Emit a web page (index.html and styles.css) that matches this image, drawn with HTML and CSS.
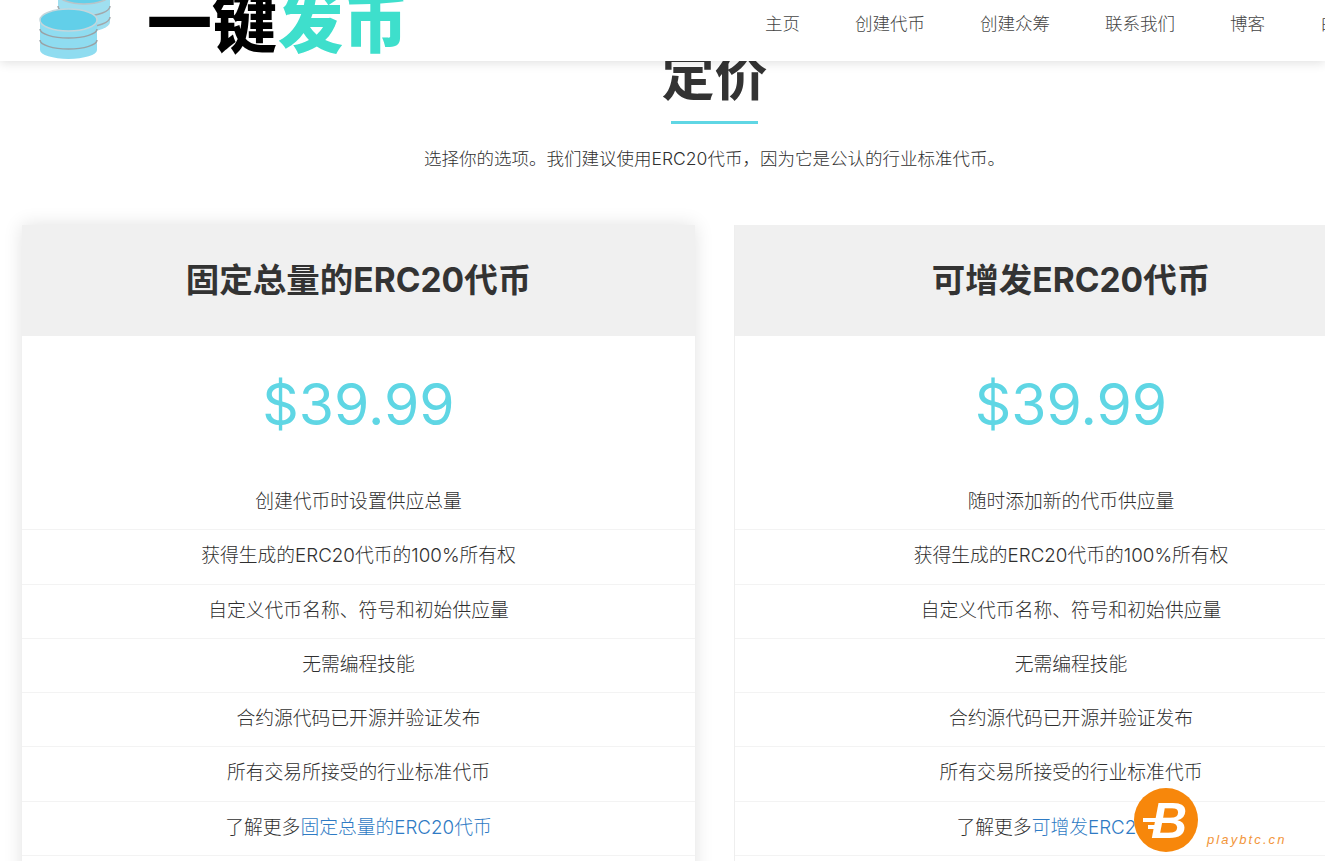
FILE: index.html
```html
<!DOCTYPE html>
<html lang="zh-CN">
<head>
  <meta charset="UTF-8" />
  <meta name="viewport" content="width=device-width, initial-scale=1.0"/>
  <title>一键发币 - 定价</title>
  <link rel="stylesheet" href="styles.css">
</head>
<body>

<header class="site-header">
  <a href="#" class="logo">
    <svg class="logo-coins" width="76" height="62" viewBox="0 0 76 62">
      <path d="M20 -8 h52 v30 a26 10 0 0 1 -52 0 z" fill="#9fdff0"/>
      <ellipse cx="46" cy="-6" rx="26" ry="10" fill="#62cfe9" stroke="#b9c4c8" stroke-width="1.500"/>
      <path d="M20 6 a26 10 0 0 0 52 0 M20 17 a26 10 0 0 0 52 0" fill="none" stroke="#a3a8ab" stroke-width="1.500"/>
      <path d="M2 20 h57 v30 a28.500 9 0 0 1 -57 0 z" fill="#8fdcf0"/>
      <path d="M2 29 a28.500 9 0 0 0 57 0 M2 40 a28.500 9 0 0 0 57 0" fill="none" stroke="#9aa2a6" stroke-width="1.500"/>
      <ellipse cx="30.500" cy="20" rx="28.500" ry="11" fill="#62cfe9" stroke="#c4d6dc" stroke-width="1.500"/>
    </svg>
    <span class="logo-text">一键<span class="logo-accent">发币</span></span>
  </a>
  <nav class="main-nav">
    <a href="#">主页</a>
    <a href="#">创建代币</a>
    <a href="#">创建众筹</a>
    <a href="#">联系我们</a>
    <a href="#">博客</a>
    <a href="#">白皮书</a>
  </nav>
</header>

<main class="pricing">
  <div class="section-title">
    <h2>定价</h2>
    <div class="title-line"></div>
    <p>选择你的选项。我们建议使用ERC20代币，因为它是公认的行业标准代币。</p>
  </div>

  <div class="plans">
    <div class="plan plan-first">
      <h3 class="plan-name">固定总量的ERC20代币</h3>
      <div class="plan-price">$39.99</div>
      <ul class="plan-list">
        <li>创建代币时设置供应总量</li>
        <li>获得生成的ERC20代币的100%所有权</li>
        <li>自定义代币名称、符号和初始供应量</li>
        <li>无需编程技能</li>
        <li>合约源代码已开源并验证发布</li>
        <li>所有交易所接受的行业标准代币</li>
        <li>了解更多<a href="#">固定总量的ERC20代币</a></li>
        <li></li>
      </ul>
    </div>

    <div class="plan plan-second">
      <h3 class="plan-name">可增发ERC20代币</h3>
      <div class="plan-price">$39.99</div>
      <ul class="plan-list">
        <li>随时添加新的代币供应量</li>
        <li>获得生成的ERC20代币的100%所有权</li>
        <li>自定义代币名称、符号和初始供应量</li>
        <li>无需编程技能</li>
        <li>合约源代码已开源并验证发布</li>
        <li>所有交易所接受的行业标准代币</li>
        <li>了解更多<a href="#">可增发ERC20代币</a></li>
        <li></li>
      </ul>
    </div>
  </div>
</main>

<div class="watermark">
  <svg class="watermark-icon" width="64" height="64" viewBox="0 0 64 64">
    <circle cx="32" cy="32" r="32" fill="#f7870b"/>
    <text x="35" y="50" class="watermark-b">B</text>
    <path d="M9 30 h17 v4 h-17 z M14 37 h12 v4 h-12 z" fill="#fff"/>
  </svg>
  <span class="watermark-text">playbtc.cn</span>
</div>

</body>
</html>
```

FILE: styles.css
```css
* {
  margin: 0; padding: 0; box-sizing: border-box;
}

html, body {
  height: 861px;
  overflow: hidden;
}

body {
  font-family: 'Inter', 'Noto Sans CJK SC', sans-serif;
  font-weight: 300;
  background: #fff;
  color: #2f2f2f;
}

a {
  text-decoration: none;
}

.site-header {
  position: absolute;
  top: 0;
  left: 0;
  width: 100%;
  height: 61px;
  background: #fff;
  box-shadow: 0 2px 10px rgba(0, 0, 0, 0.12);
  z-index: 10;
  overflow: hidden;
}

.logo {
  display: flex;
  align-items: flex-start;
  padding-left: 38px;
  height: 61px;
  overflow: hidden;
}

.logo-coins {
  flex-shrink: 0;
}

.logo-text {
  font-family: 'Noto Sans CJK SC', sans-serif;
  font-size: 65px;
  font-weight: 900;
  line-height: 65px;
  color: #000;
  white-space: nowrap;
  margin-left: 33px;
  margin-top: -13px;
}

.logo-accent {
  color: #3edfcc;
  margin-left: 1px;
}

.main-nav {
  display: flex;
  gap: 55px;
  white-space: nowrap;
  position: absolute;
  top: 12px;
  left: 765px;
}

.main-nav a {
  color: #444;
  font-size: 17.5px;
  line-height: 24px;
}

.pricing {
  padding: 47px 0 0 22px;
}

.section-title {
  width: 1385px;
  text-align: center;
}

.section-title h2 {
  font-size: 53px;
  font-weight: 700;
  line-height: 60px;
  color: #333;
}

.title-line {
  width: 87px;
  height: 3px;
  background: #5fd6e4;
  margin: 14px auto 0;
}

.section-title p {
  font-size: 17.5px;
  line-height: 26px;
  margin-top: 22px;
}

.plans {
  display: flex;
  gap: 39px;
  margin-top: 53px;
  width: 1385px;
}

.plan {
  width: 673px;
  flex-shrink: 0;
  background: #fff;
}

.plan-first {
  box-shadow: 0 0 18px rgba(0, 0, 0, 0.12);
}

.plan-second {
  border-left: 1px solid #eee;
}

.plan-name {
  height: 111px;
  background: #f0f0f0;
  font-size: 33.5px;
  font-weight: 700;
  line-height: 111px;
  text-align: center;
  color: #333;
}

.plan-price {
  height: 140px;
  padding-top: 28px;
  font-size: 57px;
  font-weight: 400;
  line-height: 82px;
  text-align: center;
  color: #5fd6e4;
}

.plan-list {
  list-style: none;
}

.plan-list li {
  height: 54.3px;
  line-height: 52px;
  font-size: 18.8px;
  text-align: center;
  border-bottom: 1px solid #f3f3f3;
}

.plan-list a {
  color: #2f7bc4;
}

.watermark {
  position: absolute;
  left: 1134px;
  top: 788px;
  width: 170px;
  height: 64px;
  z-index: 20;
}

.watermark-icon {
  display: block;
}

.watermark-b {
  font-family: 'Liberation Sans', sans-serif;
  font-size: 50px;
  font-weight: 700;
  font-style: italic;
  fill: #fff;
  text-anchor: middle;
}

.watermark-text {
  position: absolute;
  left: 73px;
  top: 44px;
  font-family: 'Liberation Sans', sans-serif;
  font-size: 13px;
  font-style: italic;
  font-weight: 400;
  letter-spacing: 2.1px;
  color: #f2953a;
}
```
